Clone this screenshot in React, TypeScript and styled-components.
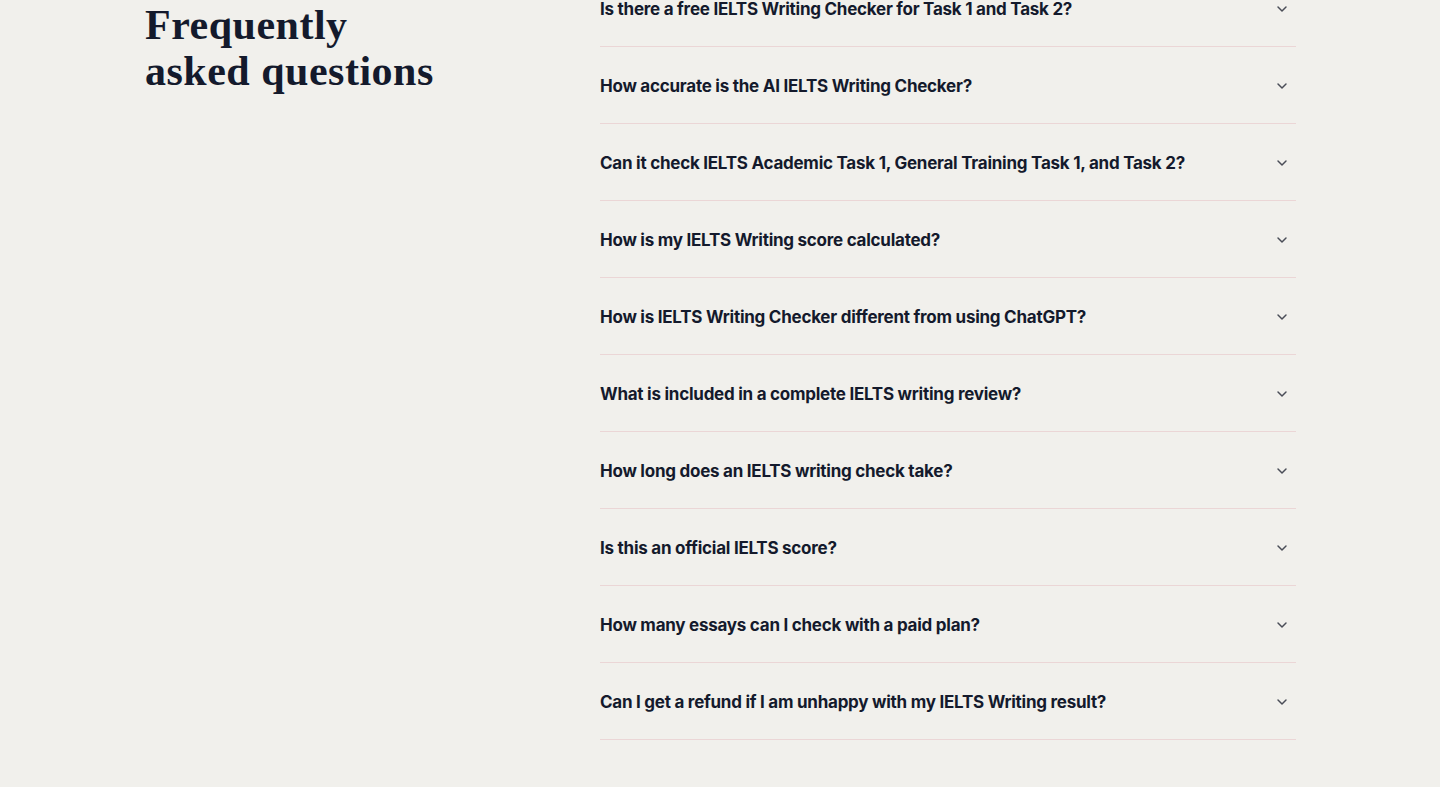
import React from 'react'
import styled, { createGlobalStyle } from 'styled-components'

const questions = [
  'Is there a free IELTS Writing Checker for Task 1 and Task 2?',
  'How accurate is the AI IELTS Writing Checker?',
  'Can it check IELTS Academic Task 1, General Training Task 1, and Task 2?',
  'How is my IELTS Writing score calculated?',
  'How is IELTS Writing Checker different from using ChatGPT?',
  'What is included in a complete IELTS writing review?',
  'How long does an IELTS writing check take?',
  'Is this an official IELTS score?',
  'How many essays can I check with a paid plan?',
  'Can I get a refund if I am unhappy with my IELTS Writing result?',
]

const GlobalStyle = createGlobalStyle`
  html, body {
    margin: 0;
    padding: 0;
    background: #f1f0ec;
    overflow: hidden;
  }
  body {
    font-family: Inter, 'Noto Sans', sans-serif;
    color: #141a2c;
  }
`

const Section = styled.section`
  height: 787px;
  overflow: hidden;
  background: #f1f0ec;
`

const Container = styled.div`
  max-width: 1152px;
  margin: -30px auto 0;
  display: grid;
  grid-template-columns: 456px 1fr;
`

const Heading = styled.h2`
  margin: 0;
  padding: 32px 0 0 1px;
  font-family: 'Liberation Serif', 'Times New Roman', serif;
  font-weight: 700;
  font-size: 42px;
  line-height: 46px;
  letter-spacing: 0.5px;
  color: #141a2c;
`

const List = styled.div`
  display: flex;
  flex-direction: column;
`

const Item = styled.button`
  display: flex;
  align-items: center;
  justify-content: space-between;
  gap: 24px;
  box-sizing: border-box;
  height: 77px;
  padding: 2px 6px 0 0;
  border: 0;
  border-bottom: 1px solid #ebd6d6;
  background: transparent;
  text-align: left;
  cursor: pointer;
`

const Question = styled.span`
  font-family: Inter, 'Noto Sans', sans-serif;
  font-weight: 700;
  font-size: 17px;
  line-height: 22px;
  letter-spacing: -0.25px;
  color: #141a2c;
`

const Chevron = () => (
  <svg width="16" height="16" viewBox="0 0 24 24" fill="none" stroke="#4a4d57" strokeWidth="2.2" strokeLinecap="round" strokeLinejoin="round">
    <path d="M6 9l6 6 6-6" />
  </svg>
)

export default function App() {
  return (
    <>
      <GlobalStyle />
      <Section>
        <Container>
          <Heading>
            Frequently
            <br />
            asked questions
          </Heading>
          <List>
            {questions.map((q) => (
              <Item key={q} type="button">
                <Question>{q}</Question>
                <Chevron />
              </Item>
            ))}
          </List>
        </Container>
      </Section>
    </>
  )
}
